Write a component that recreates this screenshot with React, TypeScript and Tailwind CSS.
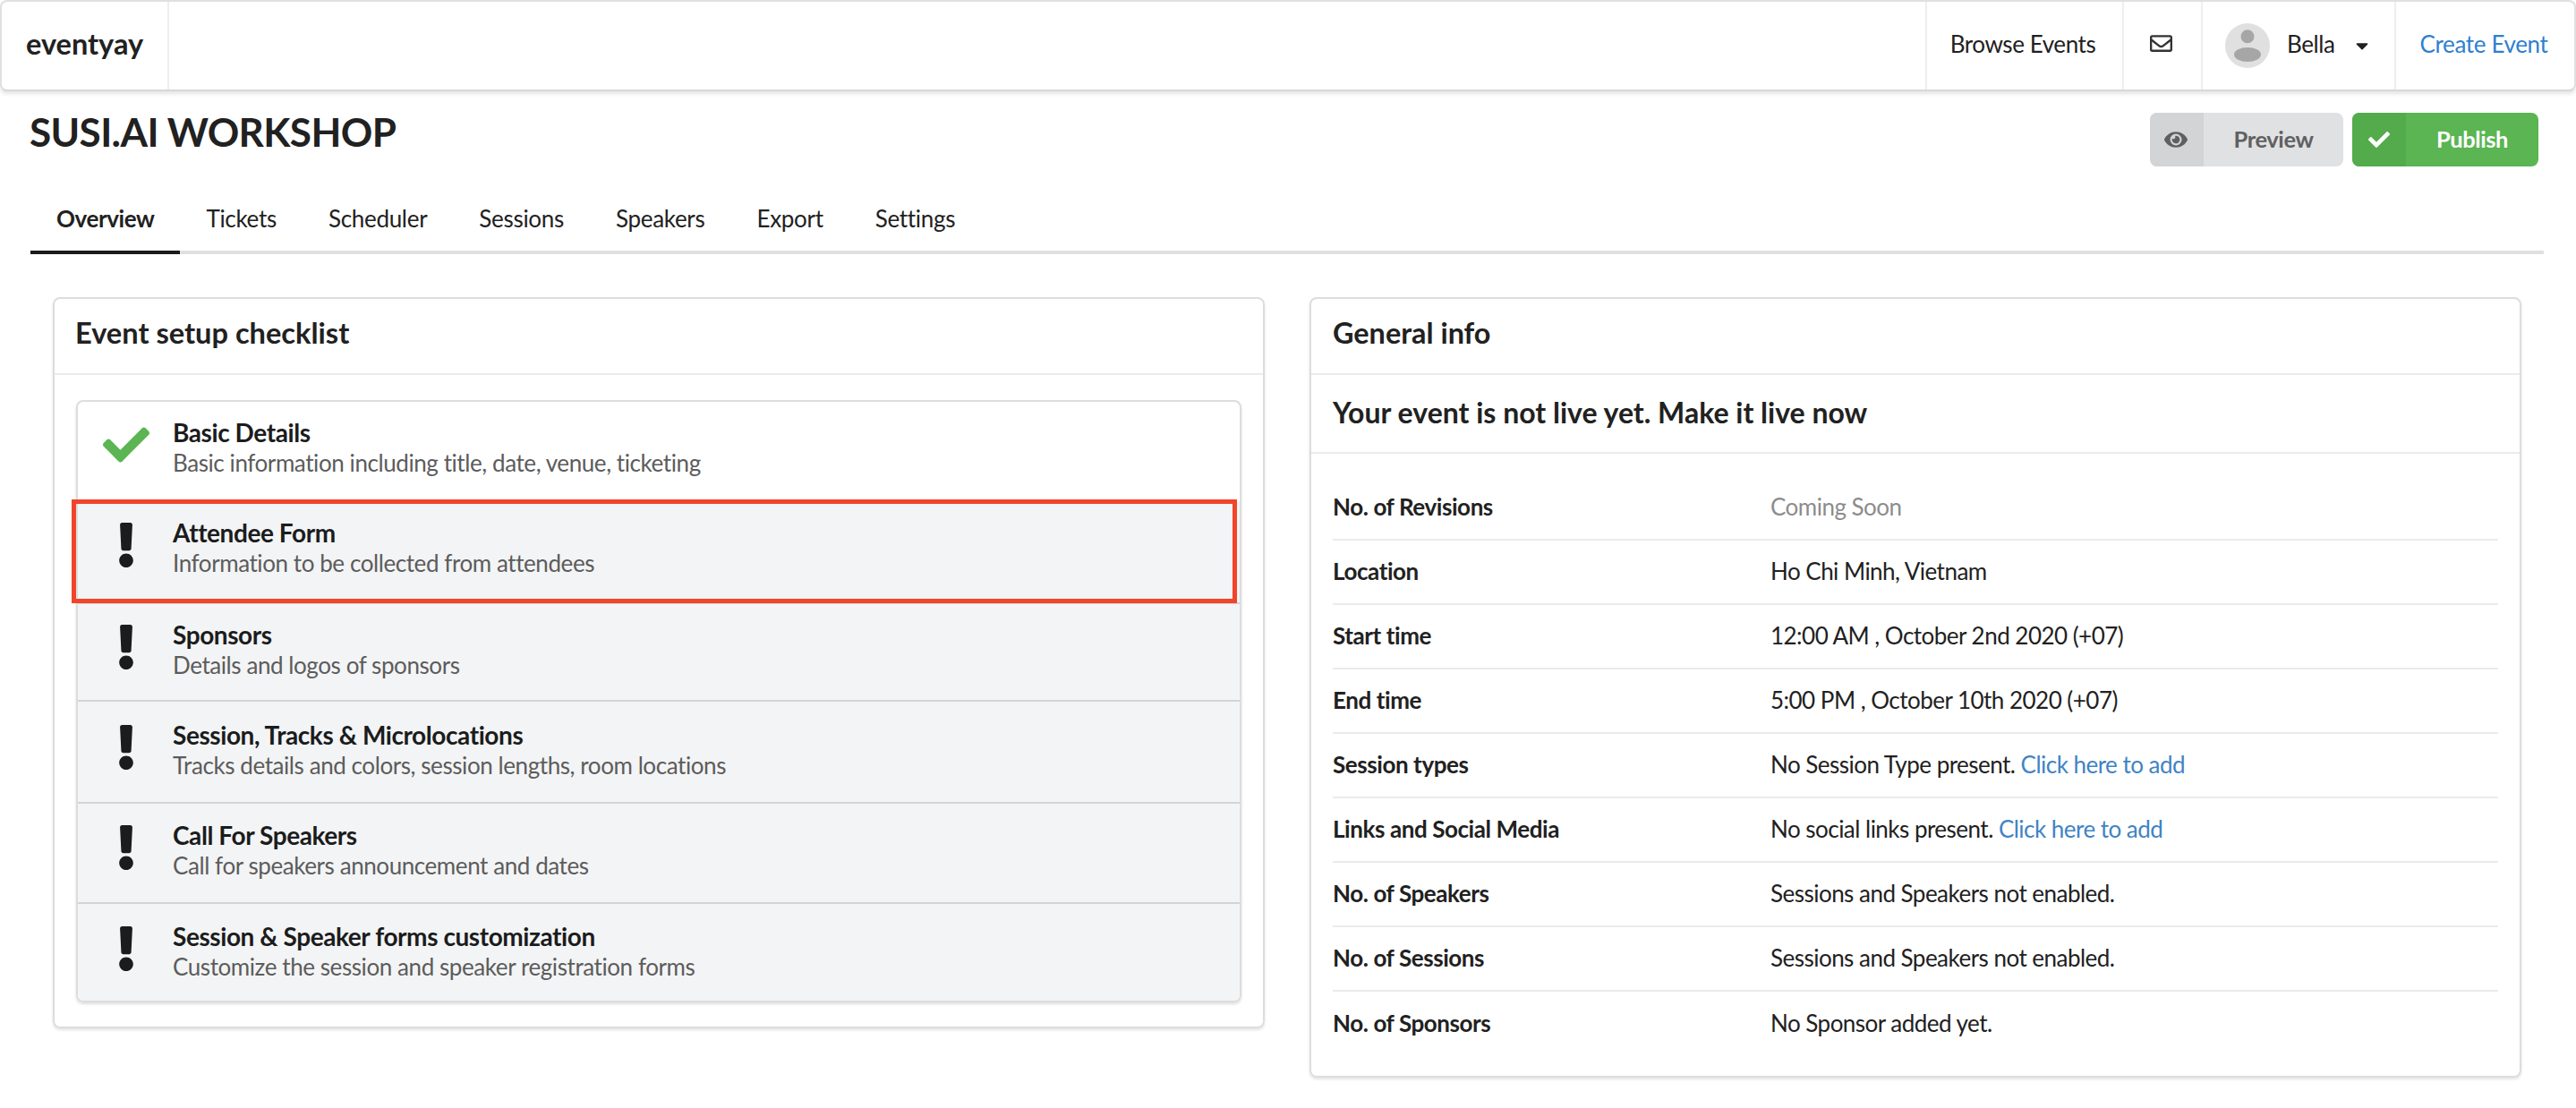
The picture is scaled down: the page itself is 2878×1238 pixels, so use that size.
import React from "react";
import { FaCheck, FaExclamation, FaEye, FaRegEnvelope, FaCaretDown } from "react-icons/fa";

const tabs = ["Overview", "Tickets", "Scheduler", "Sessions", "Speakers", "Export", "Settings"];

const checklist = [
  { title: "Basic Details", desc: "Basic information including title, date, venue, ticketing", done: true, row: "h-[112px] pt-[18px]" },
  { title: "Attendee Form", desc: "Information to be collected from attendees", marked: true, row: "h-[112px] pt-[18px]" },
  { title: "Sponsors", desc: "Details and logos of sponsors", row: "h-[109px] pt-[18px]" },
  { title: "Session, Tracks & Microlocations", desc: "Tracks details and colors, session lengths, room locations", row: "h-[114px] pt-[21px]" },
  { title: "Call For Speakers", desc: "Call for speakers announcement and dates", row: "h-[112px] pt-[19px]" },
  { title: "Session & Speaker forms customization", desc: "Customize the session and speaker registration forms", row: "h-[110px] pt-[20px] rounded-b-lg" },
];

const Link = ({ children }: { children: React.ReactNode }) => <a className="text-[#4183c4]">{children}</a>;

const info: { label: string; value: React.ReactNode; muted?: boolean }[] = [
  { label: "No. of Revisions", value: "Coming Soon", muted: true },
  { label: "Location", value: "Ho Chi Minh, Vietnam" },
  { label: "Start time", value: "12:00 AM , October 2nd 2020 (+07)" },
  { label: "End time", value: "5:00 PM , October 10th 2020 (+07)" },
  { label: "Session types", value: <>No Session Type present. <Link>Click here to add</Link></> },
  { label: "Links and Social Media", value: <>No social links present. <Link>Click here to add</Link></> },
  { label: "No. of Speakers", value: "Sessions and Speakers not enabled." },
  { label: "No. of Sessions", value: "Sessions and Speakers not enabled." },
  { label: "No. of Sponsors", value: "No Sponsor added yet." },
];

function Avatar() {
  return (
    <svg viewBox="0 0 50 50" className="w-[50px] h-[50px]">
      <circle cx="25" cy="25" r="25" fill="#e0e0e0" />
      <ellipse cx="25" cy="14.7" rx="7.5" ry="7.5" fill="#a6a6a6" />
      <ellipse cx="25" cy="35" rx="15" ry="8" fill="#a6a6a6" />
    </svg>
  );
}

export default function App() {
  return (
    <div className="w-[2878px] h-[1238px] overflow-hidden bg-white text-[#212121] font-['Lato','Liberation_Sans',sans-serif] text-[26px] tracking-[-0.42px] leading-[1.3]">
      <nav className="h-[102px] flex bg-white border-2 border-[#e0e0e0] border-b-[#d8d8d8] rounded-lg shadow-[0_3px_4px_rgba(34,36,38,0.12)]">
        <div className="w-[187px] flex items-center pl-[27px] pb-[3px] border-r-2 border-[#eeeeee] text-[32.5px] font-bold tracking-normal">eventyay</div>
        <div className="flex-1" />
        <div className="w-[220px] flex items-center justify-center pr-[4px] pb-[3px] border-l-2 border-[#eeeeee]">Browse Events</div>
        <div className="w-[88px] flex items-center justify-center pr-[3px] pb-[5px] border-l-2 border-[#eeeeee]"><FaRegEnvelope className="text-[25px] text-[#333]" /></div>
        <div className="w-[216px] flex items-center border-l-2 border-[#eeeeee] pl-[25px]">
          <Avatar />
          <span className="ml-[19px] mb-[3px]">Bella</span>
          <FaCaretDown className="ml-[20px] text-[22px]" />
        </div>
        <div className="w-[201px] flex items-center justify-center pr-[3px] pb-[3px] border-l-2 border-[#eeeeee] text-[#2f7fd0] tracking-[-0.35px]">Create Event</div>
      </nav>

      <div className="pl-[34px] pr-[36px] pt-[20px]">
        <div className="flex justify-between">
          <h1 className="text-[44px] font-bold leading-[56px] mt-[-3px] ml-[-1px] tracking-[-0.6px]">SUSI.AI WORKSHOP</h1>
          <div className="flex gap-[10px] pr-[6px] mt-[4px] text-[25.5px]">
            <div className="flex h-[60px] w-[216px] rounded-lg bg-[#e0e1e2] text-[#5f6061] font-bold overflow-hidden">
              <span className="w-[60px] bg-[#d3d4d5] flex items-center justify-center"><FaEye className="text-[26px] text-[#5f5f5f] ml-[-2px]" /></span>
              <span className="flex-1 flex items-center justify-center">Preview</span>
            </div>
            <div className="flex h-[60px] w-[208px] rounded-lg bg-[#5ab552] text-white font-bold overflow-hidden">
              <span className="w-[60px] bg-[#53ab4b] flex items-center justify-center"><FaCheck className="text-[24px]" /></span>
              <span className="flex-1 flex items-center justify-center">Publish</span>
            </div>
          </div>
        </div>

        <div className="flex border-b-4 border-[#e0e0e0] mt-[34px] h-[64px] tracking-[-0.3px]">
          {tabs.map((t, i) => (
            <div key={t} className={`px-[29px] pt-[8px] h-[64px] ${i === 0 ? "font-bold tracking-[-0.42px] border-b-4 border-[#1b1b1b]" : ""}`}>{t}</div>
          ))}
        </div>

        <div className="grid grid-cols-[1354px_1354px] gap-[50px] ml-[25px] mt-[48px] items-start">
          <section className="border-2 border-[#dddddd] rounded-lg shadow-[0_2px_3px_rgba(34,36,38,0.12)] h-[817px]">
            <h2 className="h-[85px] flex items-center px-[23px] pb-[6px] text-[32.6px] font-bold tracking-normal border-b-2 border-[#ebebeb]">Event setup checklist</h2>
            <div className="mx-[24px] mt-[28px] border-2 border-[#dddddd] rounded-lg shadow-[0_2px_3px_rgba(34,36,38,0.15)]">
              {checklist.map((c, i) => (
                <div key={c.title} className={`relative flex ${c.row} ${c.done ? "bg-white rounded-t-lg" : "bg-[#f3f4f5]"} ${i > 1 ? "border-t-2 border-[#d4d4d5]" : ""}`}>
                  <div className="w-[106px] flex justify-center shrink-0 pl-[2px]">
                    {c.done ? (
                      <FaCheck className="text-[52px] text-[#5ab552] mt-[4px]" />
                    ) : (
                      <FaExclamation className="text-[50px] text-[#1b1c1d] mt-[5px]" />
                    )}
                  </div>
                  <div>
                    <div className="text-[28px] font-bold leading-[32px] text-[#1b1c1d]">{c.title}</div>
                    <div className="leading-[33px] mt-[1.5px] text-[#5c5c5c]">{c.desc}</div>
                  </div>
                  {c.marked && <div className="absolute z-10 left-[-7px] right-[3px] top-[-3px] bottom-[-1px] border-[5px] border-[#f0452b]" />}
                </div>
              ))}
            </div>
          </section>

          <section className="border-2 border-[#dddddd] rounded-lg shadow-[0_2px_3px_rgba(34,36,38,0.12)] h-[872px]">
            <h2 className="h-[85px] flex items-center px-[24px] pb-[6px] text-[32.4px] font-bold tracking-normal border-b-2 border-[#ebebeb]">General info</h2>
            <h2 className="h-[88px] flex items-center px-[24px] pb-[2px] text-[32px] font-bold tracking-normal border-b-2 border-[#ebebeb]">Your event is not live yet. Make it live now</h2>
            <div className="mx-[24px] mt-[25px]">
              {info.map((r, i) => (
                <div key={r.label} className={`h-[72px] flex items-center ${i < info.length - 1 ? "border-b-2 border-[#ebebeb]" : ""}`}>
                  <div className="w-[489px] font-bold">{r.label}</div>
                  <div className={`tracking-[-0.52px] ${r.muted ? "text-[#8c8c8c]" : ""}`}>{r.value}</div>
                </div>
              ))}
            </div>
          </section>
        </div>
      </div>
    </div>
  );
}
